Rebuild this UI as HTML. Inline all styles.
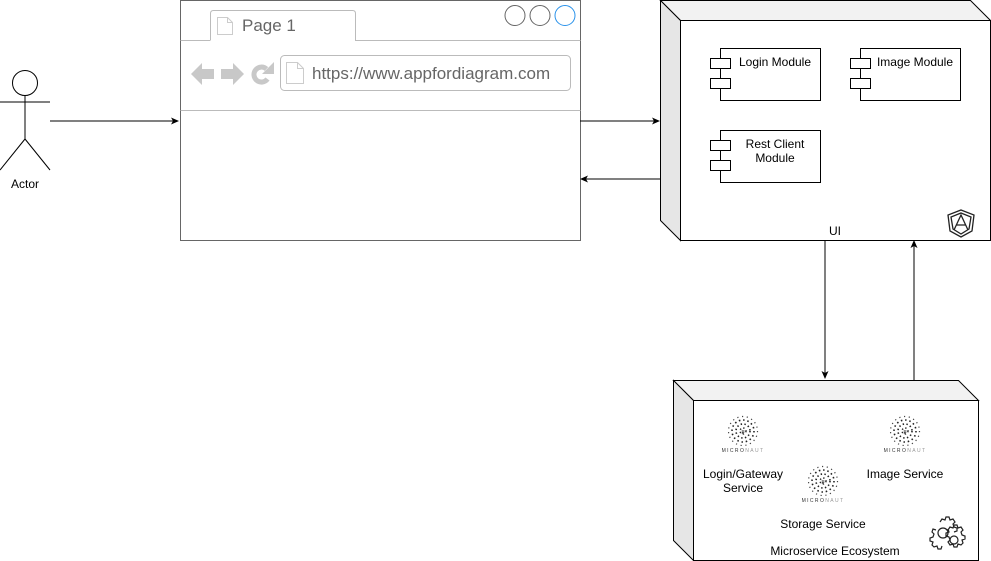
<!DOCTYPE html>
<html><head><meta charset="utf-8"><style>
html,body{margin:0;padding:0;background:#fff;width:991px;height:561px;overflow:hidden}
svg{display:block}
text{font-family:"Liberation Sans",sans-serif}
</style></head><body>
<svg width="991" height="561" viewBox="0 0 991 561" xmlns="http://www.w3.org/2000/svg">
<defs>
<marker id="ah" markerWidth="8" markerHeight="8" refX="7" refY="4" orient="auto" markerUnits="userSpaceOnUse">
<path d="M0,0.5 L8,4 L0,7.5 L2,4 Z" fill="#000"/></marker>
<g id="mn">
<circle r="3" fill="none" stroke="#222" stroke-width="1.4" stroke-dasharray="1.3 2.2"/>
<circle r="7" fill="none" stroke="#222" stroke-width="1.6" stroke-dasharray="1.4 2.4"/>
<circle r="11" fill="none" stroke="#222" stroke-width="1.6" stroke-dasharray="1.5 2.8"/>
<circle r="14.5" fill="none" stroke="#444" stroke-width="1.2" stroke-dasharray="1.2 3.6"/>
<text x="0" y="2" font-size="5" text-anchor="middle" font-weight="bold" fill="#333">μ</text>
<text x="0" y="21" font-size="5" text-anchor="middle" fill="#333" letter-spacing="1.4">MICRO<tspan fill="#999">NAUT</tspan></text>
</g>
</defs>
<g stroke="#000" stroke-width="1" fill="none">
<circle cx="25" cy="83" r="12.5" fill="#fff"/>
<line x1="25" y1="95.5" x2="25" y2="139"/>
<line x1="0" y1="102" x2="50" y2="102"/>
<line x1="25" y1="139" x2="0" y2="170"/>
<line x1="25" y1="139" x2="50" y2="170"/>
</g>
<text x="25" y="188" font-size="12" text-anchor="middle">Actor</text>
<line x1="50" y1="121" x2="178" y2="121" stroke="#000" marker-end="url(#ah)"/>
<rect x="180.5" y="0.5" width="400" height="240" fill="#fff" stroke="#666"/>
<path d="M210.5,40 V13.5 Q210.5,10.5 213.5,10.5 H352.5 Q355.5,10.5 355.5,13.5 V40.5 H580.5 M180.5,40.5 H210.5" fill="none" stroke="#bbb"/>
<path d="M217.5,17.5 H227.5 L232.5,22.5 V34.5 H217.5 Z M227.5,17.5 V22.5 H232.5" fill="none" stroke="#ccc"/>
<text x="242" y="31" font-size="17" fill="#666">Page 1</text>
<circle cx="515" cy="15.5" r="10" fill="#fff" stroke="#666"/>
<circle cx="540" cy="15.5" r="10" fill="#fff" stroke="#666"/>
<circle cx="565" cy="15.5" r="10" fill="#fff" stroke="#2a92ea"/>
<line x1="180.5" y1="110.5" x2="580.5" y2="110.5" stroke="#bbb"/>
<path d="M191,74 L202,63 V69 H214 V79 H202 V85 Z" fill="#c8c8c8"/>
<path d="M244,74 L233,63 V69 H221 V79 H233 V85 Z" fill="#c8c8c8"/>
<path d="M266.5,69 A7.5,7.5 0 1 0 267.5,79" fill="none" stroke="#c8c8c8" stroke-width="5"/>
<path d="M262,74 L274,74 L274,62 Z" fill="#c8c8c8"/>
<rect x="280.5" y="55.5" width="290" height="35" rx="4" fill="#fff" stroke="#bbb"/>
<path d="M286.5,62.5 H297.5 L303.5,68.5 V83.5 H286.5 Z M297.5,62.5 V68.5 H303.5" fill="none" stroke="#ccc"/>
<text x="312" y="79" font-size="17" fill="#666">https://www.appfordiagram.com</text>
<line x1="580" y1="121" x2="659" y2="121" stroke="#000" marker-end="url(#ah)"/>
<line x1="660" y1="179" x2="581" y2="179" stroke="#000" marker-end="url(#ah)"/>
<path d="M660.5,0.5 H970.5 L990.5,20.5 H680.5 Z" fill="#f2f2f2" stroke="#000"/>
<path d="M660.5,0.5 L680.5,20.5 V240.5 L660.5,220.5 Z" fill="#e6e6e6" stroke="#000"/>
<rect x="680.5" y="20.5" width="310" height="220" fill="#fff" stroke="#000"/>
<g fill="#fff" stroke="#000">
<rect x="720.5" y="48.5" width="100" height="52"/><rect x="710.5" y="58.5" width="20" height="10"/><rect x="710.5" y="78.5" width="20" height="10"/>
<rect x="860.5" y="48.5" width="100" height="52"/><rect x="850.5" y="58.5" width="20" height="10"/><rect x="850.5" y="78.5" width="20" height="10"/>
<rect x="720.5" y="130.5" width="100" height="52"/><rect x="710.5" y="140.5" width="20" height="10"/><rect x="710.5" y="160.5" width="20" height="10"/>
</g>
<g font-size="12" text-anchor="middle">
<text x="775" y="66">Login Module</text>
<text x="915" y="66">Image Module</text>
<text x="775" y="148">Rest Client</text>
<text x="775" y="162">Module</text>
<text x="835" y="235">UI</text>
</g>
<g fill="none" stroke="#222" stroke-width="1.3">
<path d="M961,210 L974,215 L972,231 L961,237 L950,231 L948,215 Z"/>
<path d="M961,213 L971,217 L969,229 L961,234 L953,229 L951,217 Z"/>
<path d="M954,230 L961,215 L968,230 M956.5,225 H965.5"/>
</g>
<line x1="825" y1="241" x2="825" y2="378" stroke="#000" marker-end="url(#ah)"/>
<line x1="914" y1="380" x2="914" y2="241" stroke="#000" marker-end="url(#ah)"/>
<path d="M673.5,380.5 H958.5 L978.5,400.5 H693.5 Z" fill="#f2f2f2" stroke="#000"/>
<path d="M673.5,380.5 L693.5,400.5 V560.5 L673.5,540.5 Z" fill="#e6e6e6" stroke="#000"/>
<rect x="693.5" y="400.5" width="285" height="160" fill="#fff" stroke="#000"/>
<use href="#mn" x="743" y="431"/>
<use href="#mn" x="905" y="431"/>
<use href="#mn" x="823" y="481"/>
<g font-size="12" text-anchor="middle">
<text x="743" y="478">Login/Gateway</text>
<text x="743" y="492">Service</text>
<text x="905" y="478">Image Service</text>
<text x="823" y="528">Storage Service</text>
<text x="835" y="555">Microservice Ecosystem</text>
</g>
<g fill="none" stroke="#222" stroke-width="1.2">
<path d="M940,522 l2,-3 3,1 1,-3 3,0 1,3 3,-1 2,3 -2,2 1,3 3,1 0,3 -3,1 M936,530 l-3,-1 -1,3 2,2 -1,3 -3,1 0,3 3,1 -1,3 2,2 3,-1 1,3 3,0 1,-3"/>
<circle cx="943" cy="533" r="5"/>
<path d="M948,530 l2,-3 3,1 1,-3 3,0 1,3 3,-1 2,3 -2,2 1,3 3,1 0,3 -3,1 1,3 -2,2 -3,-1 -1,3 -3,0 -1,-3 -3,1 -2,-3 2,-2 -1,-3 -3,-1 0,-3 3,-1 -1,-3 Z"/>
<circle cx="954" cy="540" r="4"/>
</g>
</svg>
</body></html>
